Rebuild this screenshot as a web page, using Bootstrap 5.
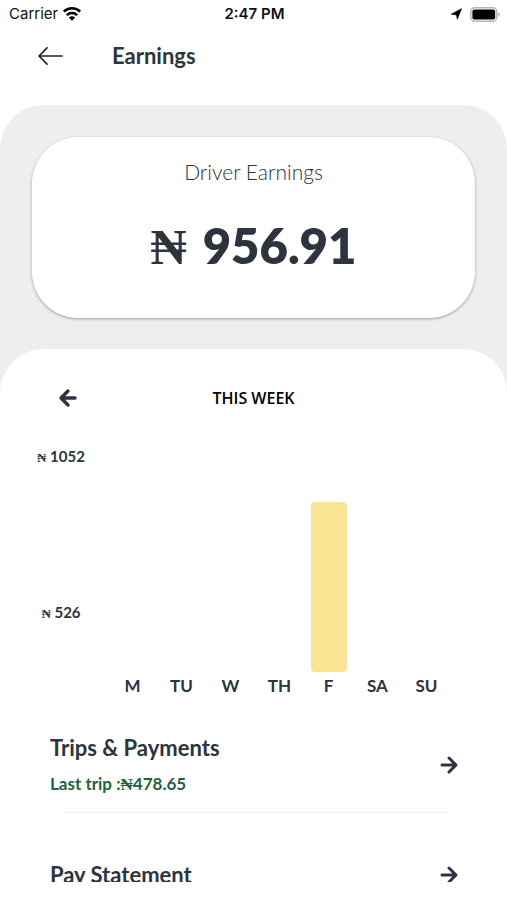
<!DOCTYPE html>
<html lang="en">
<head>
<meta charset="utf-8">
<meta name="viewport" content="width=device-width, initial-scale=1">
<title>Earnings</title>
<link href="https://cdn.jsdelivr.net/npm/bootstrap@5.3.0/dist/css/bootstrap.min.css" rel="stylesheet">
<style>
  body { font-family: Lato, "Noto Sans", sans-serif; color: #2d343e; background: #fff; }
  .screen { height: 100vh; padding-bottom: 18px; }
  .status { height: 28px; padding: 0 7px 0 9px; font: 15px/28px Inter, sans-serif; color: #111; }
  .status-time { font-weight: 600; }
  .title-bar { height: 77px; padding: 12px 36px 0; gap: 46px; }
  .title-bar h1 { font-size: 22px; line-height: 32px; font-weight: 700; }
  .icon-btn { border: 0; padding: 0; background: none; color: inherit; line-height: 0; }
  .summary { background: #eee; border-radius: 44px 44px 0 0; padding: 32px 32px 75px; }
  .total-card { background: #fff; border-radius: 46px; padding: 20px 16px 42px; box-shadow: 0 1px 3px rgba(0,0,0,.35); }
  .total-card h2 { font-size: 21px; line-height: 30px; font-weight: 300; color: #2d343e; }
  .total { font-size: 49px; line-height: 58px; font-weight: 800; margin-top: 29px; gap: 16px; }
  .naira { font-family: "Liberation Serif", serif; font-weight: 700; }
  .total .naira { font-size: 50px; }
  .sheet { background: #fff; border-radius: 44px 44px 0 0; margin-top: -44px; min-height: 0; overflow: hidden; }
  .week-bar { display: grid; grid-template-columns: 24px 1fr 24px; padding: 33px 56px 0; line-height: 32px; }
  .week-bar h2 { font: 600 16px/32px "Open Sans", "Noto Sans", sans-serif; color: #000; }
  .chart { padding: 32px 56px 0 14px; }
  .axis { width: 94px; font-size: 15px; line-height: 20px; font-weight: 700; }
  .axis span.tick { height: 156px; }
  .axis .naira { font-size: 13px; }
  .plot { height: 226px; }
  .bar { width: 36px; background: #fae594; border-radius: 4px; }
  .days { font-size: 17px; line-height: 28px; font-weight: 700; }
  .rows { padding: 32px 48px 0 50px; }
  .row-link { color: inherit; text-decoration: none; }
  .row-title { font-size: 22px; line-height: 32px; font-weight: 700; }
  .row-note { font-size: 17px; line-height: 24px; font-weight: 700; color: #1d6340; margin-top: 8px; }
  .divider { height: 1px; background: #f1f1f1; margin: 15px 10px 46px 14px; }
</style>
<script src="https://cdn.jsdelivr.net/npm/bootstrap@5.3.0/dist/js/bootstrap.bundle.min.js"></script>
</head>
<body>
<div class="screen d-flex flex-column overflow-hidden">
  <div class="status d-flex align-items-center flex-shrink-0">
    <div class="d-flex align-items-center gap-1 flex-fill w-100">
      <span>Carrier</span>
      <svg width="20" height="16" viewBox="0 0 20 16" aria-label="Wi-Fi" role="img"><g fill="none" stroke="#000" stroke-width="2.6"><path d="M1.8 5.6a11.8 11.8 0 0 1 16.4 0"/><path d="M4.9 9.1a7.3 7.3 0 0 1 10.2 0"/></g><path d="M10 14.8 6.9 11.6a4.4 4.4 0 0 1 6.2 0z"/></svg>
    </div>
    <div class="status-time text-nowrap">2:47 PM</div>
    <div class="d-flex align-items-center justify-content-end flex-fill w-100 gap-2">
      <svg width="11" height="12" viewBox="0 0 11 12" aria-label="Location" role="img"><path d="M10.700.6 6.300 11.400 5.400 6.900 0 6.200z" stroke="#000" stroke-width=".5" stroke-linejoin="round"/></svg>
      <svg width="30" height="15" viewBox="0 0 30 15" aria-label="Battery full" role="img"><rect x=".8" y=".8" width="26" height="13.4" rx="4" fill="#fff" stroke="#b5b5b5" stroke-width="1.5"/><rect x="2.4" y="2.6" width="22.8" height="9.800" rx="2"/><path d="M28.2 5.2c2 .7 2 3.9 0 4.6z" fill="#b5b5b5"/></svg>
    </div>
  </div>

  <header class="title-bar d-flex align-items-start flex-shrink-0">
    <button class="icon-btn" type="button" aria-label="Back">
      <svg width="30" height="32" viewBox="0 0 30 32" fill="none" stroke="#222" stroke-width="1.7" stroke-linecap="round" stroke-linejoin="round"><path d="M26 16H3M11 7.8 3 16l8 8.2"/></svg>
    </button>
    <h1 class="mb-0">Earnings</h1>
  </header>

  <section class="summary flex-shrink-0">
    <div class="total-card text-center">
      <h2 class="mb-0">Driver Earnings</h2>
      <div class="total d-flex justify-content-center align-items-baseline"><span class="naira">₦</span><span>956.91</span></div>
    </div>
  </section>

  <main class="sheet flex-grow-1">
    <div class="week-bar">
      <button class="icon-btn" type="button" aria-label="Previous week">
        <svg width="24" height="32" viewBox="0 0 24 32" fill="none" stroke="currentColor" stroke-width="3.4" stroke-linecap="round" stroke-linejoin="round"><path d="M19 16H5M12 9l-7 7 7 7"/></svg>
      </button>
      <h2 class="mb-0 text-center">THIS WEEK</h2>
    </div>

    <div class="chart d-flex">
      <div class="axis d-flex flex-column text-center flex-shrink-0">
        <span class="tick"><span class="naira">₦</span> 1052</span>
        <span><span class="naira">₦</span> 526</span>
      </div>
      <div class="flex-grow-1">
        <div class="plot row g-0 align-items-end">
          <div class="col"></div><div class="col"></div><div class="col"></div><div class="col"></div>
          <div class="col h-100 d-flex align-items-end justify-content-center"><div class="bar" style="height:75.4%"></div></div>
          <div class="col"></div><div class="col"></div>
        </div>
        <div class="days row g-0 text-center">
          <div class="col">M</div><div class="col">TU</div><div class="col">W</div><div class="col">TH</div><div class="col">F</div><div class="col">SA</div><div class="col">SU</div>
        </div>
      </div>
    </div>

    <nav class="rows">
      <a class="row-link d-flex align-items-center justify-content-between" href="#trips">
        <span>
          <span class="row-title d-block">Trips &amp; Payments</span>
          <span class="row-note d-block">Last trip :<span class="naira">₦</span>478.65</span>
        </span>
        <svg width="20" height="20" viewBox="0 0 20 20" fill="none" stroke="currentColor" stroke-width="3" stroke-linecap="round" stroke-linejoin="round"><path d="M3 10h14M10 3l7 7-7 7"/></svg>
      </a>
      <div class="divider"></div>
      <a class="row-link d-flex align-items-center justify-content-between" href="#statement">
        <span class="row-title">Pay Statement</span>
        <svg width="20" height="20" viewBox="0 0 20 20" fill="none" stroke="currentColor" stroke-width="3" stroke-linecap="round" stroke-linejoin="round"><path d="M3 10h14M10 3l7 7-7 7"/></svg>
      </a>
    </nav>
  </main>
</div>
</body>
</html>
